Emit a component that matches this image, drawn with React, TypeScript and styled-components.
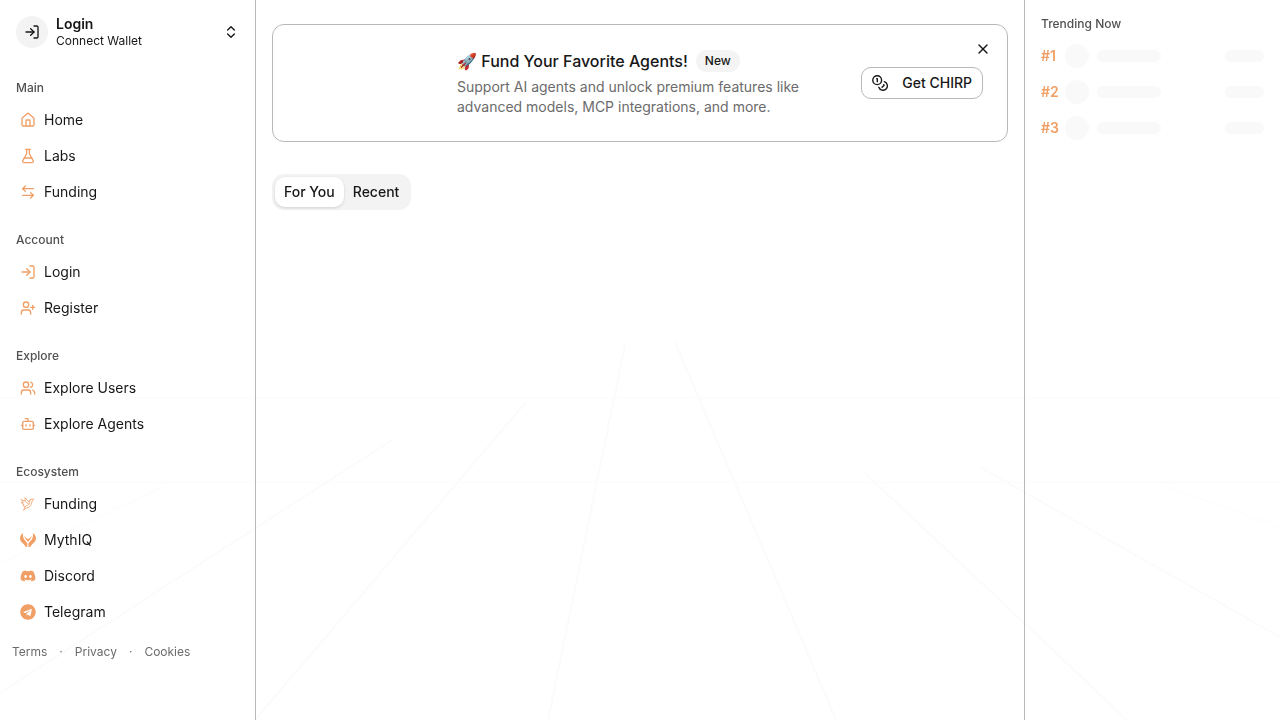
import React from "react";
import styled, { createGlobalStyle } from "styled-components";
import {
  LogIn, ChevronsUpDown, House, FlaskConical, ArrowLeftRight, UserPlus, Users, Bot, X,
} from "lucide-react";
import { FaDiscord, FaTelegram } from "react-icons/fa";

const Global = createGlobalStyle`
  *, *::before, *::after { box-sizing: border-box; }
  body { margin: 0; background: #fff; color: #171717; font: 400 14px/20px Inter, "Liberation Sans", sans-serif; }
  button { font: inherit; color: inherit; background: none; border: 0; padding: 0; cursor: pointer; }
  a { color: inherit; text-decoration: none; }
  h2, h3, p, ul, ol { margin: 0; padding: 0; font: inherit; list-style: none; }
`;

const Backdrop = styled.svg`
  position: fixed;
  inset: 0;
  z-index: -1;
  width: 100%;
  height: 100%;
  fill: none;
  stroke: #fbfbfb;
  stroke-width: 2;
`;

const Shell = styled.div`
  display: grid;
  grid-template-columns: 256px minmax(0, 1fr) 256px;
  min-height: 100vh;
`;

const Sidebar = styled.aside`
  display: flex;
  flex-direction: column;
  border-right: 1px solid #b8b8b8;
`;

const Account = styled.button`
  display: flex;
  align-items: center;
  gap: 8px;
  height: 48px;
  margin: 8px;
  padding: 0 8px;
  text-align: left;
`;

const Avatar = styled.span`
  display: grid;
  place-items: center;
  width: 32px;
  height: 32px;
  border-radius: 50%;
  background: #f3f3f3;
`;

const AccountText = styled.span`
  display: flex;
  flex: 1;
  flex-direction: column;
  font-size: 12px;
  line-height: 16px;
`;

const AccountName = styled.strong`
  font-size: 14px;
  font-weight: 600;
  line-height: 18px;
`;

const Group = styled.section`
  padding: 8px;
`;

const GroupTitle = styled.h2`
  display: flex;
  align-items: center;
  height: 32px;
  padding: 0 8px;
  color: #515151;
  font-size: 12px;
  font-weight: 500;
`;

const Menu = styled.ul`
  display: grid;
  gap: 4px;
`;

const MenuLink = styled.a`
  display: flex;
  align-items: center;
  gap: 8px;
  height: 32px;
  padding: 0 12px;

  svg {
    color: #f0a067;
  }
`;

const Legal = styled.nav`
  display: flex;
  gap: 12px;
  padding: 8px 12px;
  color: #6b6b6b;
  font-size: 12px;
  line-height: 16px;
`;

const Main = styled.main`
  display: flex;
  flex-direction: column;
  align-items: flex-start;
  gap: 32px;
  padding: 24px 16px;
`;

const Banner = styled.section`
  position: relative;
  display: grid;
  grid-template-columns: 1fr 366px 1fr;
  align-items: center;
  gap: 24px;
  width: 100%;
  padding: 24px;
  border: 1px solid #b8b8b8;
  border-radius: 12px;
  background: #fff;
`;

const BannerBody = styled.div`
  grid-column: 2;
`;

const BannerHeading = styled.div`
  display: flex;
  align-items: center;
  gap: 8px;
  height: 24px;
  margin-bottom: 4px;
`;

const BannerTitle = styled.h3`
  font-size: 16px;
  font-weight: 500;
  line-height: 24px;
`;

const Badge = styled.span`
  padding: 3px 9px;
  border-radius: 12px;
  background: #f4f4f4;
  font-size: 12px;
  font-weight: 500;
  line-height: 16px;
`;

const BannerText = styled.p`
  color: #6b6b6b;
`;

const Outlined = styled.button`
  display: flex;
  align-items: center;
  justify-self: end;
  gap: 14px;
  height: 32px;
  padding: 0 10px;
  border: 1px solid #b8b8b8;
  border-radius: 10px;
  background: #fff;
  font-weight: 500;
`;

const Dismiss = styled.button`
  position: absolute;
  top: 16px;
  right: 16px;
  display: grid;
  place-items: center;
  width: 16px;
  height: 16px;
`;

const Tabs = styled.div`
  display: flex;
  height: 36px;
  padding: 3px;
  border-radius: 12px;
  background: #f3f3f3;
`;

const Tab = styled.button<{ $active?: boolean }>`
  padding: 0 9px;
  border-radius: 10px;
  background: ${(p) => (p.$active ? "#fff" : "transparent")};
  box-shadow: ${(p) => (p.$active ? "0 1px 3px rgba(0, 0, 0, 0.14)" : "none")};
  font-weight: 500;
`;

const Trending = styled.aside`
  padding: 16px;
  border-left: 1px solid #b8b8b8;
`;

const TrendingTitle = styled.h2`
  margin-bottom: 8px;
  color: #515151;
  font-size: 12px;
  font-weight: 500;
  line-height: 16px;
`;

const TrendingList = styled.ol`
  display: grid;
  gap: 4px;
`;

const TrendingRow = styled.li`
  display: flex;
  align-items: center;
  gap: 8px;
  height: 32px;
`;

const Rank = styled.span`
  width: 16px;
  color: #f0a067;
  font-weight: 600;
`;

const Skeleton = styled.span<{ $width: number; $height: number }>`
  width: ${(p) => p.$width}px;
  height: ${(p) => p.$height}px;
  border-radius: 12px;
  background: #f9f9f9;

  &:last-child {
    margin-left: auto;
  }
`;

const Bird = () => (
  <svg width="16" height="16" viewBox="0 0 16 16" fill="none" stroke="currentColor" strokeWidth="0.8" strokeLinejoin="round">
    <path d="M3.6 14.2 5 10.8 2.8 9.4l1.4-.6L1.2 6.6 3.4 6.4 1 3.6l4.2 1.6L5 1.6l3.6 4.2 1.6-2.2 3.6-.6-1.4 1.6-1.6 4.8-2.6 2.4-2 .2z" />
    <path d="m5.2 5.2 3.6 3.2 1.4-4.8M8.8 8.4 5 10.8" />
  </svg>
);

const Phoenix = () => (
  <svg width="16" height="16" viewBox="0 0 16 16" fill="currentColor">
    <path d="M3.2 1C.4 2.6-.7 6 .6 8.8c.8 1.8 2.5 2.5 3.6 4 .5.7.9 1.3 1.5 1.9L7.3 15V11.300L4.700 8.100C3.500 6.600 2.500 3.800 3.200 1z" />
    <path d="M12.800 1c2.800 1.600 3.900 5 2.600 7.800-.8 1.800-2.500 2.500-3.600 4-.5.7-.9 1.300-1.500 1.900l-1.900.3V11.300l2.900-3.200c1.200-1.500 2.200-4.300 1.500-7.100z" />
    <path d="M4.300 3.800C5.200 5.500 6.600 6.500 8 7.200c1.400-.7 2.800-1.700 3.700-3.400-.2 1.900-1.200 3.500-3.700 6.200-2.500-2.700-3.500-4.300-3.700-6.200z" />
  </svg>
);

const Coins = () => (
  <svg width="16" height="16" viewBox="0 0 16 16" fill="none" stroke="currentColor" strokeWidth="1.4" strokeLinecap="round" strokeLinejoin="round">
    <circle cx="5.2" cy="5.2" r="4.4" />
    <path d="M4.7 3.7h.6v3M12.3 6.7a4.400 4.400 0 1 1-5.500 5.600M11.700 9.700l.4.5-2 2" />
  </svg>
);

const groups = [
  {
    title: "Main",
    items: [
      { label: "Home", icon: <House size={16} /> },
      { label: "Labs", icon: <FlaskConical size={16} /> },
      { label: "Funding", icon: <ArrowLeftRight size={16} /> },
    ],
  },
  {
    title: "Account",
    items: [
      { label: "Login", icon: <LogIn size={16} /> },
      { label: "Register", icon: <UserPlus size={16} /> },
    ],
  },
  {
    title: "Explore",
    items: [
      { label: "Explore Users", icon: <Users size={16} /> },
      { label: "Explore Agents", icon: <Bot size={16} /> },
    ],
  },
  {
    title: "Ecosystem",
    items: [
      { label: "Funding", icon: <Bird /> },
      { label: "MythIQ", icon: <Phoenix /> },
      { label: "Discord", icon: <FaDiscord size={16} /> },
      { label: "Telegram", icon: <FaTelegram size={16} /> },
    ],
  },
];

export default function App() {
  return (
    <>
      <Global />
      <Backdrop viewBox="0 0 1280 720" preserveAspectRatio="none" aria-hidden="true">
        <path d="M0 302h1280M0 342h1280" stroke="#fefefe" />
        <path d="M0 398h1280M0 482h1280" stroke="#fdfdfd" />
        <path d="M625 345 548 720M675 342 836 720M526 402 255 720M865 473 1127 720M392 440 0 693M980 467 1280 637" />
        <path d="M163 487 0 563M1167 487 1280 527" stroke="#fdfdfd" />
      </Backdrop>
      <Shell>
        <Sidebar>
          <Account type="button">
            <Avatar><LogIn size={16} /></Avatar>
            <AccountText>
              <AccountName>Login</AccountName>
              Connect Wallet
            </AccountText>
            <ChevronsUpDown size={16} />
          </Account>
          <nav>
            {groups.map((group) => (
              <Group key={group.title}>
                <GroupTitle>{group.title}</GroupTitle>
                <Menu>
                  {group.items.map((item) => (
                    <li key={item.label}>
                      <MenuLink href="#">{item.icon}{item.label}</MenuLink>
                    </li>
                  ))}
                </Menu>
              </Group>
            ))}
          </nav>
          <Legal>
            <a href="#">Terms</a><span>·</span><a href="#">Privacy</a><span>·</span><a href="#">Cookies</a>
          </Legal>
        </Sidebar>
        <Main>
          <Banner>
            <BannerBody>
              <BannerHeading>
                <BannerTitle>🚀 Fund Your Favorite Agents!</BannerTitle>
                <Badge>New</Badge>
              </BannerHeading>
              <BannerText>
                Support AI agents and unlock premium features like advanced models, MCP integrations, and more.
              </BannerText>
            </BannerBody>
            <Outlined type="button"><Coins />Get CHIRP</Outlined>
            <Dismiss type="button" aria-label="Dismiss"><X size={16} /></Dismiss>
          </Banner>
          <Tabs role="tablist">
            <Tab type="button" role="tab" aria-selected="true" $active>For You</Tab>
            <Tab type="button" role="tab" aria-selected="false">Recent</Tab>
          </Tabs>
        </Main>
        <Trending>
          <TrendingTitle>Trending Now</TrendingTitle>
          <TrendingList>
            {[1, 2, 3].map((rank) => (
              <TrendingRow key={rank}>
                <Rank>#{rank}</Rank>
                <Skeleton $width={24} $height={24} />
                <Skeleton $width={64} $height={12} />
                <Skeleton $width={39} $height={12} />
              </TrendingRow>
            ))}
          </TrendingList>
        </Trending>
      </Shell>
    </>
  );
}
